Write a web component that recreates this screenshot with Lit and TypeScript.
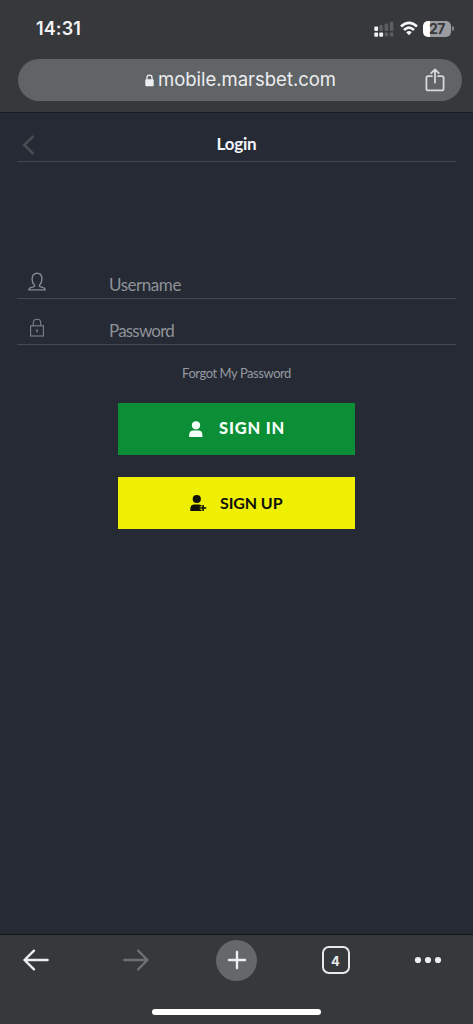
import { LitElement, html, css } from "lit";
import { customElement } from "lit/decorators.js";

@customElement("browser-header")
class BrowserHeader extends LitElement {
  static styles = css`
    :host { display: block; height: 113px; box-sizing: border-box; background: linear-gradient(#37383c, #35393b); border-bottom: 1px solid #171b28; font-family: Inter, "Liberation Sans", sans-serif; }
    .status { display: flex; justify-content: space-between; align-items: center; height: 59px; box-sizing: border-box; padding: 0 19.5px 2px 36px; }
    .time { font-size: 18px; font-weight: 600; line-height: 22px; letter-spacing: 0.1px; color: #f3f4f6; }
    .indicators { display: flex; align-items: center; }
    .wifi { margin: 0 5px 0 6px; }
    .battery { display: flex; align-items: center; }
    .cell { width: 28px; height: 16px; border-radius: 5px; background: linear-gradient(90deg, #fff 7px, #9c9da0 7px); color: #37383c; font-size: 14px; font-weight: 700; line-height: 16px; letter-spacing: -0.4px; text-align: center; }
    .tip { width: 1.5px; height: 5px; margin-left: 1px; border-radius: 0 2px 2px 0; background: #88898c; }
    .address { display: flex; align-items: center; height: 41.5px; width: 443.5px; margin-left: 18px; box-sizing: border-box; border-radius: 21px; background: #616467; padding: 0 17px 0 127px; }
    .url { flex: 1; margin: 0 0 2px 4px; font-size: 18.5px; line-height: 24px; letter-spacing: -0.02px; color: #eceef0; white-space: nowrap; }
    .lock { margin-top: 1px; }
  `;
  render() {
    return html`
      <div class="status">
        <div class="time">14:31</div>
        <div class="indicators">
          <svg width="20" height="16" viewBox="0 0 20 16">
            <g fill="#f2f3f4"><rect x="0.3" y="5.6" width="3.8" height="4.3" rx="1"/><rect x="0.3" y="11.6" width="3.8" height="4.2" rx="1"/><rect x="5.3" y="11.6" width="3.8" height="4.2" rx="1"/></g>
            <g fill="#5d5e62"><rect x="5.4" y="4" width="3.5" height="6" rx="1"/><rect x="10.6" y="2.4" width="3.5" height="7.6" rx="1"/><rect x="15.8" y="0.7" width="3.5" height="9.3" rx="1"/><rect x="10.6" y="11.6" width="3.5" height="4" rx="1"/><rect x="15.8" y="11.6" width="3.5" height="4" rx="1"/></g>
          </svg>
          <svg class="wifi" width="18" height="15" viewBox="0 0 18 15">
            <g fill="none" stroke="#f5f6f7" stroke-width="2.7"><path d="M1 5.6Q9-1.8 17 5.6"/><path d="M4 8.9Q9 4.2 14 8.9"/></g>
            <path d="M6.2 11.2Q9 8.8 11.8 11.2L9 14.2Z" fill="#f5f6f7"/>
          </svg>
          <div class="battery"><div class="cell">27</div><div class="tip"></div></div>
        </div>
      </div>
      <div class="address">
        <svg class="lock" width="9" height="13" viewBox="0 0 9 13"><rect x="0.3" y="5.3" width="8.4" height="7" rx="1" fill="#eceef0"/><path d="M2 6V3.6a2.5 2.5 0 0 1 5 0V6" fill="none" stroke="#eceef0" stroke-width="1.3"/></svg>
        <div class="url">mobile.marsbet.com</div>
        <svg width="20" height="24" viewBox="0 0 20 24" fill="none" stroke="#d5d7d9" stroke-width="1.8" stroke-linecap="round" stroke-linejoin="round"><path d="M7 8.2H3.2Q1.4 8.2 1.4 10V20.4Q1.4 22.4 3.4 22.4H16.6Q18.6 22.4 18.6 20.4V10Q18.6 8.2 16.8 8.2H13M10 14.5V1.6M6.2 5.2L10 1.4L13.8 5.2"/></svg>
      </div>`;
  }
}

@customElement("login-page")
class LoginPage extends LitElement {
  static styles = css`
    :host { display: block; flex: 1; padding: 0 17px; background: #252a34; font-family: Lato, "Open Sans", sans-serif; }
    .title { display: grid; grid-template-columns: 30px 1fr 30px; align-items: center; height: 49px; box-sizing: border-box; padding-top: 13px; border-bottom: 1px solid #42464e; }
    .back { margin-left: 5px; margin-top: 3px; }
    .heading { margin: 0; font-size: 17px; font-weight: 700; line-height: 24px; letter-spacing: -0.2px; text-align: center; color: #f3f5fa; }
    .fields { margin-top: 91px; }
    .field { display: flex; align-items: center; height: 46px; box-sizing: border-box; border-bottom: 1px solid #454a52; color: #8f9298; padding: 18px 0 0 11px; }
    .label { margin: 1px 0 0 63px; font-size: 17px; line-height: 24px; letter-spacing: -0.45px; white-space: nowrap; }
    .label.password { letter-spacing: -0.8px; }
    .glyph { margin-bottom: 5px; }
    .forgot { margin-top: 19px; font-size: 13px; line-height: 18px; letter-spacing: -0.44px; text-align: center; color: #9699a0; white-space: nowrap; }
    .actions { display: flex; flex-direction: column; gap: 22.5px; width: 237px; margin: 21px 0 0 101px; }
    .button { display: flex; align-items: center; height: 51.5px; box-sizing: border-box; padding-left: 70px; font-size: 16px; white-space: nowrap; }
    .signin { background: #0b8e36; color: #f4fff8; font-size: 16.5px; font-weight: 900; letter-spacing: 0.8px; }
    .signup { background: #eeef02; color: #10120a; font-weight: 700; letter-spacing: -0.1px; }
    .caption { margin: 0 0 1px 13px; }
    .signup .caption { margin-left: 12px; }
  `;
  render() {
    return html`
      <div class="title">
        <svg class="back" width="13" height="20" viewBox="0 0 13 20"><path d="M11.5 1L2.2 10L11.5 19" fill="none" stroke="#4a4d54" stroke-width="2.5"/></svg>
        <h1 class="heading">Login</h1>
      </div>
      <div class="fields">
        <div class="field">
          <svg class="glyph" width="18" height="20" viewBox="0 0 18 20" fill="none" stroke="#858990" stroke-width="1.4" stroke-linejoin="round"><path d="M6.5 13.2C4.9 11.8 4.1 9.5 4.1 6.9C4.1 3.2 6.1 1.2 9 1.2S13.9 3.2 13.9 6.9C13.9 9.5 13.1 11.8 11.5 13.2C11.1 14.2 11.6 14.6 12.8 14.9L15.2 15.6C16.6 16 17.2 16.7 17.2 17.9H.8C.8 16.7 1.4 16 2.8 15.6L5.2 14.9C6.4 14.6 6.9 14.2 6.5 13.2Z"/></svg>
          <span class="label">Username</span>
        </div>
        <div class="field">
          <svg class="glyph" width="18" height="20" viewBox="0 0 18 20" fill="none" stroke="#7e8289" stroke-width="1.1"><rect x="2.6" y="7.8" width="12.8" height="10.2"/><path d="M5.2 7.8V5.2Q5.2 1.3 9 1.3T12.8 5.2V7.8"/><path d="M9 11.3V14.6" stroke-width="1.4"/></svg>
          <span class="label password">Password</span>
        </div>
      </div>
      <div class="forgot">Forgot My Password</div>
      <div class="actions">
        <div class="button signin">
          <svg width="18" height="18" viewBox="0 0 18 18" fill="#f4fff8"><circle cx="8" cy="5.3" r="4.1"/><path d="M1.2 17V14.8Q1.2 10.4 5.6 10.4H10.2Q14.4 10.4 14.4 14.8V17Z"/></svg>
          <span class="caption">SIGN IN</span>
        </div>
        <div class="button signup">
          <svg width="20" height="18" viewBox="0 0 20 18"><circle cx="8.8" cy="5" r="4.1" fill="#10120a"/><path d="M2.3 17V14.8Q2.3 10.4 6.7 10.4H11Q13 10.4 14.8 12L12 14L14.5 17Z" fill="#10120a"/><path d="M15.1 10.8V17.2M11.9 14H18.3" stroke="#eeef02" stroke-width="2.8"/><path d="M15.1 11V17M12.1 14H18.3" stroke="#10120a" stroke-width="1.6"/></svg>
          <span class="caption">SIGN UP</span>
        </div>
      </div>`;
  }
}

@customElement("browser-toolbar")
class BrowserToolbar extends LitElement {
  static styles = css`
    :host { display: block; height: 90px; box-sizing: border-box; border-top: 1px solid #11161a; background: #35393b; font-family: Inter, "Liberation Sans", sans-serif; }
    .tools { display: grid; grid-template-columns: 100px 94px 99.5px 98.5px 28px; align-items: center; height: 50px; padding-left: 22px; }
    .new { display: flex; align-items: center; justify-content: center; width: 41px; height: 41px; border-radius: 50%; background: #64686b; }
    .tabs { display: flex; align-items: center; justify-content: center; width: 28px; height: 28px; box-sizing: border-box; border: 2px solid #e7eaec; border-radius: 7px; font-size: 13px; font-weight: 700; color: #e7eaec; padding-top: 1px; margin-left: 6px; }
    .home { width: 169px; height: 6px; margin: 23.5px auto 0; border-radius: 3px; background: #fff; }
  `;
  render() {
    return html`
      <div class="tools">
        <svg width="28" height="22" viewBox="0 0 28 22" fill="none" stroke="#eceef0" stroke-width="2.4" stroke-linecap="round" stroke-linejoin="round"><path d="M25.6 11H2.5M12 1.7L2.5 11L12 20.3"/></svg>
        <svg width="28" height="22" viewBox="0 0 28 22" fill="none" stroke="#6c7073" stroke-width="2.4" stroke-linecap="round" stroke-linejoin="round"><path d="M2.4 11H25.5M16 1.7L25.5 11L16 20.3"/></svg>
        <div class="new"><svg width="20" height="20" viewBox="0 0 20 20" stroke="#eceef0" stroke-width="2.4" stroke-linecap="round"><path d="M10 2V18M2 10H18"/></svg></div>
        <div class="tabs">4</div>
        <svg width="28" height="8" viewBox="0 0 28 8" fill="#eceef0"><circle cx="4" cy="4" r="3.1"/><circle cx="14" cy="4" r="3.1"/><circle cx="24" cy="4" r="3.1"/></svg>
      </div>
      <div class="home"></div>`;
  }
}

@customElement("app-root")
class AppRoot extends LitElement {
  static styles = css`
    :host { display: flex; flex-direction: column; width: 473px; height: 1024px; overflow: hidden; background: #252a34; }
  `;
  render() {
    return html`<browser-header></browser-header><login-page></login-page><browser-toolbar></browser-toolbar>`;
  }
}
